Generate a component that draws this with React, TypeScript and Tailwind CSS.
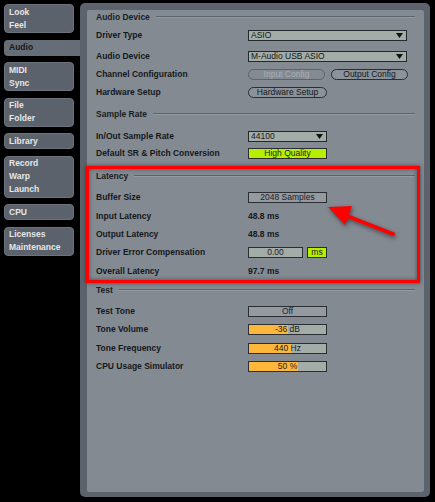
import type { ReactNode } from "react"

const tabs = [
  { lines: ["Look", "Feel"] },
  { lines: ["Audio"], active: true },
  { lines: ["MIDI", "Sync"] },
  { lines: ["File", "Folder"] },
  { lines: ["Library"] },
  { lines: ["Record", "Warp", "Launch"] },
  { lines: ["CPU"] },
  { lines: ["Licenses", "Maintenance"] },
]

function Tab({ lines, active }: { lines: string[]; active?: boolean }) {
  if (active) {
    return (
      <div className="w-[76px] rounded-l-[4px] bg-[#676d76] py-[1.5px] pl-[5px] text-[#16191d]">
        {lines.map((l) => (
          <div key={l} className="h-[13px] leading-[13px]">{l}</div>
        ))}
      </div>
    )
  }
  return (
    <div className="w-[70px] rounded-[4px] border border-[#6d737c] bg-[#5c626b] py-[0.5px] pl-[4px] text-[#e4e6e8]">
      {lines.map((l) => (
        <div key={l} className="h-[13px] leading-[13px]">{l}</div>
      ))}
    </div>
  )
}

function Header({ title, mt }: { title: string; mt: string }) {
  return (
    <div className={`flex h-[16px] items-center ${mt}`}>
      <span className="font-bold text-[#1b1e22]">{title}</span>
      <div className="ml-[6px] flex-1 border-t border-b border-t-[#5d636b] border-b-[#959ba2]" />
    </div>
  )
}

function Row({ label, mt, children }: { label: string; mt: string; children?: ReactNode }) {
  return (
    <div className={`flex h-[16px] items-center ${mt}`}>
      <span className="w-[152px] font-bold text-[#15181c]">{label}</span>
      {children}
    </div>
  )
}

function Dropdown({ value, wide }: { value: string; wide?: boolean }) {
  return (
    <div
      className={`flex h-[11px] items-center justify-between border border-[#25282b] bg-[#a3aca6] pl-[2px] pr-[3px] font-normal text-[#15181b] ${
        wide ? "w-[159px]" : "w-[79px]"
      }`}
    >
      <span className="leading-none">{value}</span>
      <svg width="7" height="5" viewBox="0 0 7 5">
        <polygon points="0,0 7,0 3.5,5" fill="#111" />
      </svg>
    </div>
  )
}

function Pill({ label, disabled, w }: { label: string; disabled?: boolean; w: string }) {
  return (
    <div
      className={`flex h-[11px] items-center justify-center rounded-full border ${w} ${
        disabled ? "border-[#5e636a] text-[#a9aeb4]" : "border-[#2a2d31] bg-[#8b9299] text-[#15181b]"
      }`}
    >
      <span className="leading-none">{label}</span>
    </div>
  )
}

function Box({ value, bg, w = "w-[79px]" }: { value: string; bg: string; w?: string }) {
  return (
    <div className={`flex h-[11px] items-center justify-center border border-[#2a2d31] ${bg} ${w} text-[#1e2125]`}>
      <span className="leading-none">{value}</span>
    </div>
  )
}

function Slider({ value, fill }: { value: string; fill: number }) {
  return (
    <div className="relative flex h-[11px] w-[79px] items-center justify-center border border-[#2a2d31] bg-[#a3aca6] text-[#1a1c1f]">
      <div className="absolute top-0 bottom-0 left-0 bg-[#ffb73b]" style={{ width: fill }} />
      <span className="relative leading-none">{value}</span>
    </div>
  )
}

export default function App() {
  return (
    <div className="relative flex h-[502px] w-[435px] overflow-hidden bg-black pt-[3px] text-[8.5px] font-['Liberation_Sans',Arial,sans-serif] font-bold">
      <div className="flex w-[80px] flex-col gap-[6.5px] pl-[4px] pt-[1px]">
        {tabs.map((t, i) => (
          <Tab key={i} lines={t.lines} active={t.active} />
        ))}
      </div>

      <div className="h-[494px] w-[350px] rounded-[5px] bg-[#5d636c] pt-[7px] pl-[7px] pr-[6px] pb-[5px]">
        <div className="flex h-full flex-col rounded-[2px] bg-[#838a92] px-[9px] font-bold">
          <div className="flex h-[14px] items-center">
            <span className="text-[#1b1e22]">Audio Device</span>
            <div className="ml-[6px] flex-1 border-t border-b border-t-[#5d636b] border-b-[#959ba2]" />
          </div>
          <Row label="Driver Type" mt="mt-[3px]">
            <Dropdown value="ASIO" wide />
          </Row>
          <Row label="Audio Device" mt="mt-[5px]">
            <Dropdown value="M-Audio USB ASIO" wide />
          </Row>
          <Row label="Channel Configuration" mt="mt-[2px]">
            <div className="flex gap-[6px] font-normal">
              <Pill label="Input Config" disabled w="w-[77px]" />
              <Pill label="Output Config" w="w-[77px]" />
            </div>
          </Row>
          <Row label="Hardware Setup" mt="mt-[2px]">
            <div className="font-normal">
              <Pill label="Hardware Setup" w="w-[79px]" />
            </div>
          </Row>

          <Header title="Sample Rate" mt="mt-[6px]" />
          <Row label="In/Out Sample Rate" mt="mt-[6px]">
            <Dropdown value="44100" />
          </Row>
          <Row label="Default SR & Pitch Conversion" mt="mt-[1px]">
            <div className="font-normal">
              <Box value="High Quality" bg="bg-[#b6f000]" />
            </div>
          </Row>

          <Header title="Latency" mt="mt-[7px]" />
          <Row label="Buffer Size" mt="mt-[5px]">
            <div className="font-normal">
              <Box value="2048 Samples" bg="bg-[#959aa1]" />
            </div>
          </Row>
          <Row label="Input Latency" mt="mt-[3px]">
            <span className="text-[#15181c]">48.8 ms</span>
          </Row>
          <Row label="Output Latency" mt="mt-[2px]">
            <span className="text-[#15181c]">48.8 ms</span>
          </Row>
          <Row label="Driver Error Compensation" mt="mt-[2px]">
            <div className="flex gap-[4px] font-normal">
              <Box value="0.00" bg="bg-[#a3aca6]" w="w-[55px]" />
              <Box value="ms" bg="bg-[#b6f000]" w="w-[20px]" />
            </div>
          </Row>
          <Row label="Overall Latency" mt="mt-[3px]">
            <span className="text-[#15181c]">97.7 ms</span>
          </Row>

          <Header title="Test" mt="mt-[3px]" />
          <Row label="Test Tone" mt="mt-[5px]">
            <div className="font-normal">
              <Box value="Off" bg="bg-[#959aa1]" />
            </div>
          </Row>
          <Row label="Tone Volume" mt="mt-[2px]">
            <div className="font-normal">
              <Slider value="-36 dB" fill={39} />
            </div>
          </Row>
          <Row label="Tone Frequency" mt="mt-[3px]">
            <div className="font-normal">
              <Slider value="440 Hz" fill={43} />
            </div>
          </Row>
          <Row label="CPU Usage Simulator" mt="mt-[2px]">
            <div className="font-normal">
              <Slider value="50 %" fill={49} />
            </div>
          </Row>
        </div>
      </div>

      {/* annotation */}
      <div className="pointer-events-none absolute left-[86px] top-[166px] h-[117px] w-[334px] border-[3px] border-[#ff0000] shadow-[0_0_4px_rgba(0,0,0,0.55),inset_0_0_4px_rgba(0,0,0,0.45)]" />
      <svg
        className="pointer-events-none absolute left-0 top-0 drop-shadow-[1px_2px_2px_rgba(0,0,0,0.5)]"
        width="435"
        height="502"
        viewBox="0 0 435 502"
      >
        <line x1="342" y1="214" x2="393" y2="234" stroke="#ff0000" strokeWidth="4" strokeLinecap="round" />
        <polygon points="328,207 352,206 345,225" fill="#ff0000" />
      </svg>
    </div>
  )
}
